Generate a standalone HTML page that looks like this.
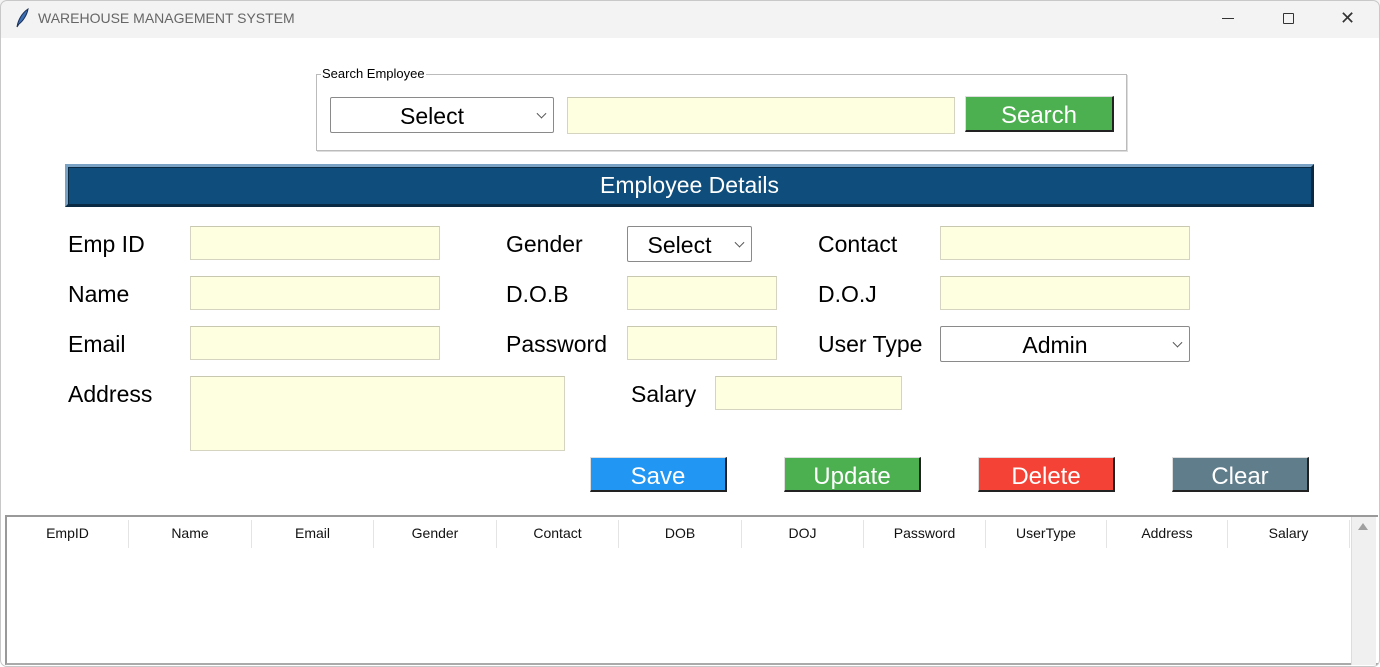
<!DOCTYPE html>
<html><head><style>
*{margin:0;padding:0;box-sizing:border-box}
body{width:1380px;height:667px;background:#fff;font-family:"Liberation Sans",Arial,sans-serif;position:relative;overflow:hidden}
.a{position:absolute}
.tb{left:0;top:0;width:1380px;height:38px;background:#f3f3f3;}
.win{left:0;top:0;width:1380px;height:667px;border:1px solid #c8c8c8;border-radius:7px;pointer-events:none}
.lbl{font-size:23px;color:#000;line-height:26px}
.en{background:#fefee0;border:1px solid #d4d4c0;border-top-color:#c8c8b0}
.cb{background:#fff;border:1px solid #8a8a8a;border-radius:2px;font-size:23px;text-align:center;color:#000}
.cb span.ar{position:absolute;right:8px;top:50%;width:7px;height:7px;border-right:1px solid #555;border-bottom:1px solid #555;transform:translateY(-70%) rotate(45deg)}
.btn{color:#fff;font-size:24px;text-align:center;line-height:37px;border-right:2px solid #222;border-bottom:2px solid #222;border-top:1px solid #ddd;border-left:1px solid #ddd}
.th{top:520px;font-size:14px;text-align:center;height:28px;line-height:26px;border-right:1px solid #e4e4e4;color:#111}
</style></head><body>
<div class="a tb"></div>
<svg class="a" style="left:14px;top:8px" width="16" height="20" viewBox="0 0 16 20"><path d="M3 19 C4 12 8 5 14 1 C13 7 9 13 5 16 Z" fill="#3a6fb5" stroke="#1a2f55" stroke-width="1"/></svg>
<div class="a" style="left:38px;top:10px;font-size:14px;color:#666">WAREHOUSE MANAGEMENT SYSTEM</div>
<div class="a" style="left:1222px;top:18px;width:12px;height:1px;background:#333"></div>
<div class="a" style="left:1283px;top:13px;width:11px;height:11px;border:1px solid #333;border-radius:1px"></div>
<div class="a" style="left:1340px;top:11px;font-size:18px;color:#333;line-height:14px">✕</div>

<div class="a" style="left:316px;top:74px;width:811px;height:77px;border:1px solid #bbb;box-shadow:1px 1px 0 #ddd"></div>
<div class="a" style="left:321px;top:66px;background:#fff;padding:0 1px;font-size:13px">Search Employee</div>
<div class="a cb" style="left:330px;top:97px;width:224px;height:36px;line-height:36px;text-indent:-20px">Select<span class="ar"></span></div>
<div class="a en" style="left:567px;top:97px;width:388px;height:37px"></div>
<div class="a btn" style="left:965px;top:96px;width:149px;height:36px;background:#4caf50;line-height:38px">Search</div>

<div class="a" style="left:65px;top:164px;width:1249px;height:43px;background:#0f4e7c;border:3px solid #7aa2c4;border-right-color:#0a2a44;border-bottom-color:#0a2a44;box-shadow:inset 1px 1px 0 #0a2a44;color:#fff;font-size:23px;text-align:center;line-height:36px">Employee Details</div>

<div class="a lbl" style="left:68px;top:231px">Emp ID</div>
<div class="a lbl" style="left:68px;top:281px">Name</div>
<div class="a lbl" style="left:68px;top:331px">Email</div>
<div class="a lbl" style="left:68px;top:381px">Address</div>
<div class="a en" style="left:190px;top:226px;width:250px;height:34px"></div>
<div class="a en" style="left:190px;top:276px;width:250px;height:34px"></div>
<div class="a en" style="left:190px;top:326px;width:250px;height:34px"></div>
<div class="a en" style="left:190px;top:376px;width:375px;height:75px"></div>

<div class="a lbl" style="left:506px;top:231px">Gender</div>
<div class="a lbl" style="left:506px;top:281px">D.O.B</div>
<div class="a lbl" style="left:506px;top:331px">Password</div>
<div class="a cb" style="left:627px;top:226px;width:125px;height:36px;line-height:36px;text-indent:-20px">Select<span class="ar"></span></div>
<div class="a en" style="left:627px;top:276px;width:150px;height:34px"></div>
<div class="a en" style="left:627px;top:326px;width:150px;height:34px"></div>
<div class="a lbl" style="left:631px;top:381px">Salary</div>
<div class="a en" style="left:715px;top:376px;width:187px;height:34px"></div>

<div class="a lbl" style="left:818px;top:231px">Contact</div>
<div class="a lbl" style="left:818px;top:281px">D.O.J</div>
<div class="a lbl" style="left:818px;top:331px">User Type</div>
<div class="a en" style="left:940px;top:226px;width:250px;height:34px"></div>
<div class="a en" style="left:940px;top:276px;width:250px;height:34px"></div>
<div class="a cb" style="left:940px;top:326px;width:250px;height:36px;line-height:36px;text-indent:-20px">Admin<span class="ar"></span></div>

<div class="a btn" style="left:590px;top:457px;width:137px;height:35px;background:#2196f3">Save</div>
<div class="a btn" style="left:784px;top:457px;width:137px;height:35px;background:#4caf50">Update</div>
<div class="a btn" style="left:978px;top:457px;width:137px;height:35px;background:#f44336">Delete</div>
<div class="a btn" style="left:1172px;top:457px;width:137px;height:35px;background:#607d8b">Clear</div>

<div class="a" style="left:5px;top:515px;width:1373px;height:150px;border:2px solid #999;border-right:none;border-bottom-color:#aaa"></div>
<div class="a" style="left:1351px;top:517px;width:25px;height:148px;background:#f0f0f0;border-left:1px solid #ddd"></div>
<div class="a" style="left:1358px;top:523px;width:0;height:0;border-left:5px solid transparent;border-right:5px solid transparent;border-bottom:7px solid #a0a0a0"></div>
<div class="a th" style="left:7px;width:122px">EmpID</div>
<div class="a th" style="left:129px;width:123px">Name</div>
<div class="a th" style="left:252px;width:122px">Email</div>
<div class="a th" style="left:374px;width:123px">Gender</div>
<div class="a th" style="left:497px;width:122px">Contact</div>
<div class="a th" style="left:619px;width:123px">DOB</div>
<div class="a th" style="left:742px;width:122px">DOJ</div>
<div class="a th" style="left:864px;width:122px">Password</div>
<div class="a th" style="left:986px;width:121px">UserType</div>
<div class="a th" style="left:1107px;width:121px">Address</div>
<div class="a th" style="left:1228px;width:122px">Salary</div>
<div class="a win"></div>
</body></html>
